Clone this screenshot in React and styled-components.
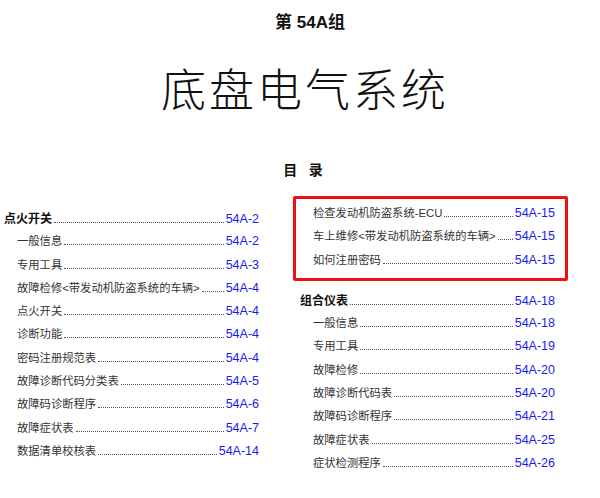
import React from "react";
import styled, { createGlobalStyle } from "styled-components";

const Global = createGlobalStyle`
  body { margin: 0; background: #fff; font-family: "Liberation Sans", "Noto Sans CJK SC", sans-serif; }
`;

const Page = styled.div`
  width: 600px;
  height: 498px;
  overflow: hidden;
  display: flex;
  flex-direction: column;
  align-items: center;
`;

const Group = styled.div`
  margin-top: 8px;
  font-size: 17px;
  font-weight: bold;
  color: #111;
  margin-left: 20px;
`;

const Title = styled.h1`
  margin: 30px 0 0 0;
  font-size: 45px;
  font-weight: 300;
  letter-spacing: 3px;
  color: #111;
  line-height: 58px;
  margin-left: 10px;
`;

const Toc = styled.div`
  margin-top: 38px;
  font-size: 14px;
  font-weight: bold;
  color: #111;
  margin-left: 6px;
  white-space: pre;
`;

const Columns = styled.div`
  align-self: stretch;
  display: grid;
  grid-template-columns: 255px 255px;
  column-gap: 41px;
  padding-left: 4px;
  margin-top: 30px;
`;

const Col = styled.div`
  display: flex;
  flex-direction: column;
`;

const Boxed = styled.div`
  border: 3px solid #ee1111;
  border-radius: 2px;
  margin: -13px -13px 10px -7px;
  padding: 5px 10px 4px 4px;
  display: flex;
  flex-direction: column;
`;

const Row = styled.div`
  display: flex;
  align-items: baseline;
  height: 23.3px;
  white-space: nowrap;
  padding-left: ${p => (p.$main ? 0 : 13)}px;
  font-size: ${p => (p.$main ? 12 : 11.3)}px;
  font-weight: ${p => (p.$main ? "bold" : "normal")};
  color: ${p => (p.$main ? "#111" : "#333")};
`;

const Dots = styled.span`
  flex: 1;
  border-bottom: 1px dotted #555;
  margin: 0 2px;
  min-width: 8px;
`;

const Num = styled.span`
  color: #1a1aee;
  font-size: 12.5px;
  font-weight: normal;
`;

const Entry = ({ main, label, num }) => (
  <Row $main={main}>
    <span>{label}</span>
    <Dots />
    <Num>{num}</Num>
  </Row>
);

const left = [
  ["一般信息", "54A-2"],
  ["专用工具", "54A-3"],
  ["故障检修<带发动机防盗系统的车辆>", "54A-4"],
  ["点火开关", "54A-4"],
  ["诊断功能", "54A-4"],
  ["密码注册规范表", "54A-4"],
  ["故障诊断代码分类表", "54A-5"],
  ["故障码诊断程序", "54A-6"],
  ["故障症状表", "54A-7"],
  ["数据清单校核表", "54A-14"],
];

const boxed = [
  ["检查发动机防盗系统-ECU", "54A-15"],
  ["车上维修<带发动机防盗系统的车辆>", "54A-15"],
  ["如何注册密码", "54A-15"],
];

const right = [
  ["一般信息", "54A-18"],
  ["专用工具", "54A-19"],
  ["故障检修", "54A-20"],
  ["故障诊断代码表", "54A-20"],
  ["故障码诊断程序", "54A-21"],
  ["故障症状表", "54A-25"],
  ["症状检测程序", "54A-26"],
];

export default function App() {
  return (
    <Page>
      <Global />
      <Group>第 54A组</Group>
      <Title>底盘电气系统</Title>
      <Toc>目   录</Toc>
      <Columns>
        <Col>
          <Entry main label="点火开关" num="54A-2" />
          {left.map(([l, n]) => <Entry key={l} label={l} num={n} />)}
        </Col>
        <Col>
          <Boxed>
            {boxed.map(([l, n]) => <Entry key={l} label={l} num={n} />)}
          </Boxed>
          <Entry main label="组合仪表" num="54A-18" />
          {right.map(([l, n]) => <Entry key={l} label={l} num={n} />)}
        </Col>
      </Columns>
    </Page>
  );
}
